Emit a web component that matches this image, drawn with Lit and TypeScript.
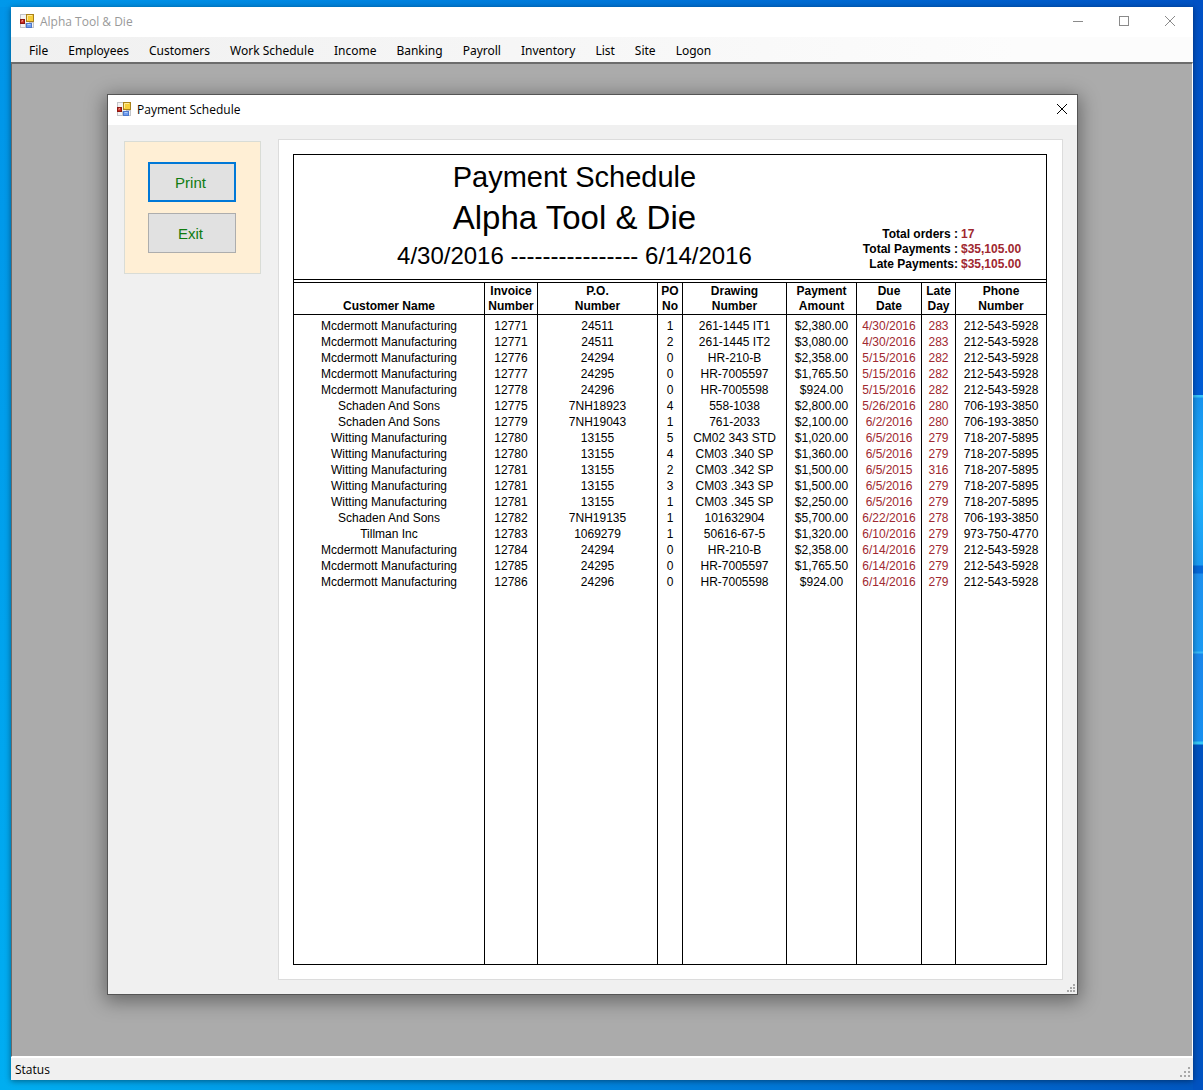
import { LitElement, html, svg, css } from "lit";
import { customElement } from "lit/decorators.js";

const MENU = ["File", "Employees", "Customers", "Work Schedule", "Income", "Banking", "Payroll", "Inventory", "List", "Site", "Logon"];

type Row = [string, string, string, string, string, string, string, string, string];

const MC = "Mcdermott Manufacturing";
const SC = "Schaden And Sons";
const WI = "Witting Manufacturing";

const ROWS: Row[] = [
  [MC, "12771", "24511", "1", "261-1445 IT1", "$2,380.00", "4/30/2016", "283", "212-543-5928"],
  [MC, "12771", "24511", "2", "261-1445 IT2", "$3,080.00", "4/30/2016", "283", "212-543-5928"],
  [MC, "12776", "24294", "0", "HR-210-B", "$2,358.00", "5/15/2016", "282", "212-543-5928"],
  [MC, "12777", "24295", "0", "HR-7005597", "$1,765.50", "5/15/2016", "282", "212-543-5928"],
  [MC, "12778", "24296", "0", "HR-7005598", "$924.00", "5/15/2016", "282", "212-543-5928"],
  [SC, "12775", "7NH18923", "4", "558-1038", "$2,800.00", "5/26/2016", "280", "706-193-3850"],
  [SC, "12779", "7NH19043", "1", "761-2033", "$2,100.00", "6/2/2016", "280", "706-193-3850"],
  [WI, "12780", "13155", "5", "CM02 343 STD", "$1,020.00", "6/5/2016", "279", "718-207-5895"],
  [WI, "12780", "13155", "4", "CM03 .340 SP", "$1,360.00", "6/5/2016", "279", "718-207-5895"],
  [WI, "12781", "13155", "2", "CM03 .342 SP", "$1,500.00", "6/5/2015", "316", "718-207-5895"],
  [WI, "12781", "13155", "3", "CM03 .343 SP", "$1,500.00", "6/5/2016", "279", "718-207-5895"],
  [WI, "12781", "13155", "1", "CM03 .345 SP", "$2,250.00", "6/5/2016", "279", "718-207-5895"],
  [SC, "12782", "7NH19135", "1", "101632904", "$5,700.00", "6/22/2016", "278", "706-193-3850"],
  ["Tillman Inc", "12783", "1069279", "1", "50616-67-5", "$1,320.00", "6/10/2016", "279", "973-750-4770"],
  [MC, "12784", "24294", "0", "HR-210-B", "$2,358.00", "6/14/2016", "279", "212-543-5928"],
  [MC, "12785", "24295", "0", "HR-7005597", "$1,765.50", "6/14/2016", "279", "212-543-5928"],
  [MC, "12786", "24296", "0", "HR-7005598", "$924.00", "6/14/2016", "279", "212-543-5928"],
];

const COLUMNS: { name: string; lines: string[]; late?: boolean }[] = [
  { name: "customer", lines: ["Customer Name"] },
  { name: "invoice", lines: ["Invoice", "Number"] },
  { name: "po", lines: ["P.O.", "Number"] },
  { name: "pono", lines: ["PO", "No"] },
  { name: "drawing", lines: ["Drawing", "Number"] },
  { name: "amount", lines: ["Payment", "Amount"] },
  { name: "due", lines: ["Due", "Date"], late: true },
  { name: "day", lines: ["Late", "Day"], late: true },
  { name: "phone", lines: ["Phone", "Number"] },
];

const formIcon = html`
  <svg class="form-icon" width="14" height="14" viewBox="0 0 14 14" aria-hidden="true">
    <rect x="0.5" y="0.5" width="13" height="13" fill="#f4f4f4" stroke="#c2c4c8" />
    <path d="M5.5 9V13M9 8.5H13" stroke="#c2c4c8" fill="none" />
    <rect x="6.5" y="0.5" width="7" height="7" fill="#f7cf3c" stroke="#a8811c" />
    <path d="M7.5 6V1.5H12" stroke="#ffeb99" fill="none" />
    <rect x="0.5" y="5.5" width="4" height="4" fill="#c8281e" stroke="#8c1812" />
    <path d="M2 8V6.5H3" stroke="#f29a8c" fill="none" />
    <rect x="6.5" y="9.5" width="5" height="4" fill="#6f9df0" stroke="#4d78cc" />
    <path d="M7.5 10.5H10.5" stroke="#b4cffb" fill="none" />
  </svg>`;

const crossIcon = html`
  <svg width="12" height="12" viewBox="0 0 12 12" aria-hidden="true">
    <path d="M1 1L11 11M11 1L1 11" stroke="currentColor" fill="none" />
  </svg>`;

const GRIP = [[6, 0], [3, 3], [6, 3], [0, 6], [3, 6], [6, 6]];

const gripIcon = (gap: number) => html`
  <svg class="grip" width=${gap * 2 + 2} height=${gap * 2 + 2} aria-hidden="true">
    ${GRIP.map(([x, y]) => svg`<rect x=${(x / 3) * gap} y=${(y / 3) * gap} width="2" height="2" fill="#a8a8a8" />`)}
  </svg>`;

@customElement("payment-report")
export class PaymentReport extends LitElement {
  static styles = css`
    :host {
      display: flex;
      flex: 1;
      min-width: 0;
      padding: 14px 15px 14px 14px;
      border: 1px solid #dcdcdc;
      background: #fff;
      color: #000;
      font-family: "Liberation Sans", Arial, sans-serif;
      font-size: 12px;
    }
    .frame {
      display: flex;
      flex: 1;
      flex-direction: column;
      min-width: 0;
      border: 1px solid #000;
    }
    .head {
      display: flex;
      border-bottom: 1px solid #000;
      margin-bottom: 2px;
    }
    .titles {
      flex: 1;
      padding: 0 8px 4px 0;
      text-align: center;
      white-space: nowrap;
    }
    .title, .company, .range {
      margin: 0;
      font-weight: 400;
      line-height: 38px;
    }
    .title {
      font-size: 29px;
      line-height: 44px;
    }
    .company {
      font-size: 33px;
    }
    .range {
      font-size: 24px;
    }
    .totals {
      display: grid;
      grid-template-columns: auto 85px;
      align-content: end;
      column-gap: 3px;
      margin: 0;
      padding-bottom: 7px;
      font-weight: 700;
      line-height: 15px;
      white-space: nowrap;
    }
    .label {
      text-align: right;
    }
    .value {
      margin: 0;
      color: #a02830;
    }
    .table {
      flex: 1;
      width: 100%;
      table-layout: fixed;
      border-spacing: 0;
      border-top: 1px solid #000;
      text-align: center;
      white-space: nowrap;
    }
    .invoice { width: 53px; }
    .po { width: 120px; }
    .pono { width: 25px; }
    .drawing { width: 104px; }
    .amount { width: 70px; }
    .due { width: 65px; }
    .day { width: 34px; }
    .phone { width: 90px; }
    .heading, .cell {
      padding: 0;
      border-right: 1px solid #000;
    }
    .heading {
      padding-top: 1px;
      border-bottom: 1px solid #000;
      line-height: 15px;
      vertical-align: bottom;
    }
    .heading:last-child, .cell:last-child {
      border-right: 0;
    }
    .row {
      height: 16px;
    }
    .cell {
      line-height: 16px;
    }
    .row:first-child .cell {
      padding-top: 3px;
    }
    .late {
      color: #a02830;
    }
  `;

  render() {
    return html`
      <section class="frame">
        <header class="head">
          <div class="titles">
            <h2 class="title">Payment Schedule</h2>
            <h1 class="company">Alpha Tool &amp; Die</h1>
            <p class="range">4/30/2016 ---------------- 6/14/2016</p>
          </div>
          <dl class="totals">
            <dt class="label">Total orders :</dt><dd class="value">17</dd>
            <dt class="label">Total Payments :</dt><dd class="value">$35,105.00</dd>
            <dt class="label">Late Payments:</dt><dd class="value">$35,105.00</dd>
          </dl>
        </header>
        <table class="table">
          <colgroup>${COLUMNS.map((c) => html`<col class=${c.name} />`)}</colgroup>
          <thead>
            <tr>
              ${COLUMNS.map((c) => html`<th class="heading" scope="col">${c.lines.map((line, i) => (i ? html`<br />${line}` : line))}</th>`)}
            </tr>
          </thead>
          <tbody>
            ${ROWS.map((row) => html`
              <tr class="row">
                ${row.map((text, i) => html`<td class="cell ${COLUMNS[i].late ? "late" : ""}">${text}</td>`)}
              </tr>`)}
            <tr aria-hidden="true">${COLUMNS.map(() => html`<td class="cell"></td>`)}</tr>
          </tbody>
        </table>
      </section>
    `;
  }
}

@customElement("payment-dialog")
export class PaymentDialog extends LitElement {
  static styles = css`
    :host {
      position: relative;
      display: flex;
      flex: 1;
      flex-direction: column;
      min-width: 0;
      border: 1px solid #555;
      background: #f0f0f0;
      box-shadow: 0 4px 18px 2px rgba(0, 0, 0, 0.4);
    }
    .titlebar {
      display: flex;
      align-items: center;
      height: 28px;
      padding: 0 9px 2px;
      background: #fff;
      color: #000;
      font-size: 12px;
    }
    .caption {
      flex: 1;
      margin-left: 6px;
    }
    .close {
      display: flex;
      padding: 0;
      border: 0;
      background: none;
      color: #000;
    }
    .body {
      display: flex;
      flex: 1;
      gap: 17px;
      padding: 14px 14px 14px 16px;
    }
    .actions {
      display: flex;
      flex-direction: column;
      align-self: flex-start;
      gap: 11px;
      margin-top: 2px;
      padding: 20px 24px 20px 23px;
      border: 1px solid #d9dcd6;
      background: #ffefd5;
    }
    .action {
      width: 88px;
      height: 40px;
      padding: 0 3px 0 0;
      border: 1px solid #adadad;
      background: #e1e1e1;
      color: #107c10;
      font: 15px "Liberation Sans", Arial, sans-serif;
    }
    .action.primary {
      border: 2px solid #0078d7;
    }
    .grip {
      position: absolute;
      right: 2px;
      bottom: 2px;
    }
  `;

  render() {
    return html`
      <header class="titlebar">
        ${formIcon}
        <span class="caption">Payment Schedule</span>
        <button class="close" aria-label="Close">${crossIcon}</button>
      </header>
      <div class="body">
        <div class="actions">
          <button class="action primary">Print</button>
          <button class="action">Exit</button>
        </div>
        <payment-report></payment-report>
      </div>
      ${gripIcon(3)}
    `;
  }
}

@customElement("app-root")
export class AppRoot extends LitElement {
  static styles = css`
    :host {
      display: flex;
      box-sizing: border-box;
      min-height: 100vh;
      padding: 7px 10px 10px 11px;
      font-family: "Open Sans", "Segoe UI", sans-serif;
      font-size: 12px;
      background:
        linear-gradient(180deg, #0050c4 0, #005cd4 395px, #37c4fb 395px 397px, #1793ee 398px, #1fb0fa 490px, #1b9cf2 565px, #0568d8 566px 573px, #1e90ee 574px, #1a9af2 651px, #35b8f8 652px 653px, #1a86ea 654px, #1790f0 741px, #35c8f8 742px 744px, #0052c0 745px) right / 10px 100% no-repeat,
        linear-gradient(90deg, #00aef0, #0072d4 70%, #0056c0) bottom / 100% 10px no-repeat,
        linear-gradient(90deg, #0098ea, #0074d8 55%, #0052c4) top / 100% 7px no-repeat,
        linear-gradient(180deg, #0094e8, #00aef2);
    }
    .window {
      display: flex;
      flex: 1;
      flex-direction: column;
      min-width: 0;
      background: #f0f0f0;
      box-shadow: 0 1px 6px rgba(0, 0, 0, 0.45);
    }
    .titlebar {
      display: flex;
      align-items: center;
      height: 28px;
      padding: 0 17px 2px 9px;
      background: #fff;
      color: #999;
    }
    .caption {
      flex: 1;
      margin-left: 6px;
    }
    .controls {
      display: flex;
      gap: 34px;
    }
    .control {
      display: flex;
      padding: 0;
      border: 0;
      background: none;
      color: #8a8a8a;
    }
    .menubar {
      display: flex;
      height: 25px;
      padding-left: 8px;
      background: linear-gradient(90deg, #f0f0f0, #fcfcfc 85%);
    }
    .item {
      padding: 1px 10px 0;
      border: 0;
      background: none;
      color: #000;
      font: 12px "Noto Sans", "Segoe UI", sans-serif;
      white-space: nowrap;
    }
    .workspace {
      display: flex;
      flex: 1;
      padding: 30px 114px 61px 95px;
      border: 1px solid #fff;
      border-top: 2px solid #6c6c6c;
      border-left-color: #696969;
      background: #ababab;
    }
    .status {
      display: flex;
      align-items: center;
      justify-content: space-between;
      height: 22px;
      padding: 0 3px 0 4px;
      border-top: 1px solid #fff;
      color: #000;
    }
    .grip {
      align-self: flex-end;
      margin-bottom: 3px;
    }
  `;

  render() {
    return html`
      <div class="window">
        <header class="titlebar">
          ${formIcon}
          <span class="caption">Alpha Tool &amp; Die</span>
          <div class="controls">
            <button class="control" aria-label="Minimize">
              <svg width="12" height="12" viewBox="0 0 12 12" aria-hidden="true"><path d="M1 6.5H11" stroke="currentColor" /></svg>
            </button>
            <button class="control" aria-label="Maximize">
              <svg width="12" height="12" viewBox="0 0 12 12" aria-hidden="true"><rect x="1.5" y="1.5" width="9" height="9" fill="none" stroke="currentColor" /></svg>
            </button>
            <button class="control" aria-label="Close">${crossIcon}</button>
          </div>
        </header>
        <nav class="menubar">${MENU.map((name) => html`<button class="item">${name}</button>`)}</nav>
        <main class="workspace"><payment-dialog></payment-dialog></main>
        <footer class="status"><span>Status</span>${gripIcon(4)}</footer>
      </div>
    `;
  }
}
